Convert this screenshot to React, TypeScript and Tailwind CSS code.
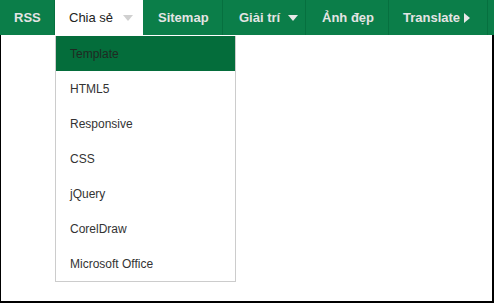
import React from "react";

const subItems = [
  "Template",
  "HTML5",
  "Responsive",
  "CSS",
  "jQuery",
  "CorelDraw",
  "Microsoft Office",
];

function Down({ className }: { className: string }) {
  return (
    <svg width="10" height="6" viewBox="0 0 10 6" className={className}>
      <path d="M0 0h10L5 6z" fill="currentColor" />
    </svg>
  );
}

function Right() {
  return (
    <svg width="6" height="10" viewBox="0 0 6 10" className="ml-[4px] text-[#e8e8e8]">
      <path d="M0 0v10l6-5z" fill="currentColor" />
    </svg>
  );
}

export default function App() {
  const item =
    "flex h-[35px] items-center border-r border-[#06703f] text-[13px] font-bold text-[#e4e4e4]";

  return (
    <div
      className="flex h-[303px] w-[494px] flex-col bg-white"
      style={{ fontFamily: '"Liberation Sans", Arial, sans-serif' }}
    >
      <nav className="flex h-[35px] shrink-0 bg-[#0b7e49]">
        <div className={`${item} w-[55px] pl-[14px]`}>RSS</div>
        <div className="relative flex h-[35px] w-[88px] items-center bg-white pl-[14px] text-[13px] text-[#222]">
          Chia sẻ
          <Down className="ml-[10px] text-[#d0d0d0]" />
          <div className="absolute left-0 top-[36px] z-10 w-[181px] border-x border-b border-[#cccccc] bg-white">
            {subItems.map((s, i) => (
              <div
                key={s}
                className={`flex h-[35px] items-center pl-[14px] text-[12px] ${
                  i === 0 ? "bg-[#046d3b] text-[#1f2a22]" : "text-[#333]"
                }`}
              >
                {s}
              </div>
            ))}
          </div>
        </div>
        <div className={`${item} w-[80px] pl-[15px]`}>Sitemap</div>
        <div className={`${item} w-[83px] pl-[16px]`}>
          Giải trí
          <Down className="ml-[8px] text-[#e8e8e8]" />
        </div>
        <div className={`${item} w-[83px] pl-[16px]`}>Ảnh đẹp</div>
        <div className={`${item} w-[99px] pl-[14px]`}>
          Translate
          <Right />
        </div>
      </nav>
      <div className="flex-1 border-b-2 border-l border-r-2 border-black" />
    </div>
  );
}
